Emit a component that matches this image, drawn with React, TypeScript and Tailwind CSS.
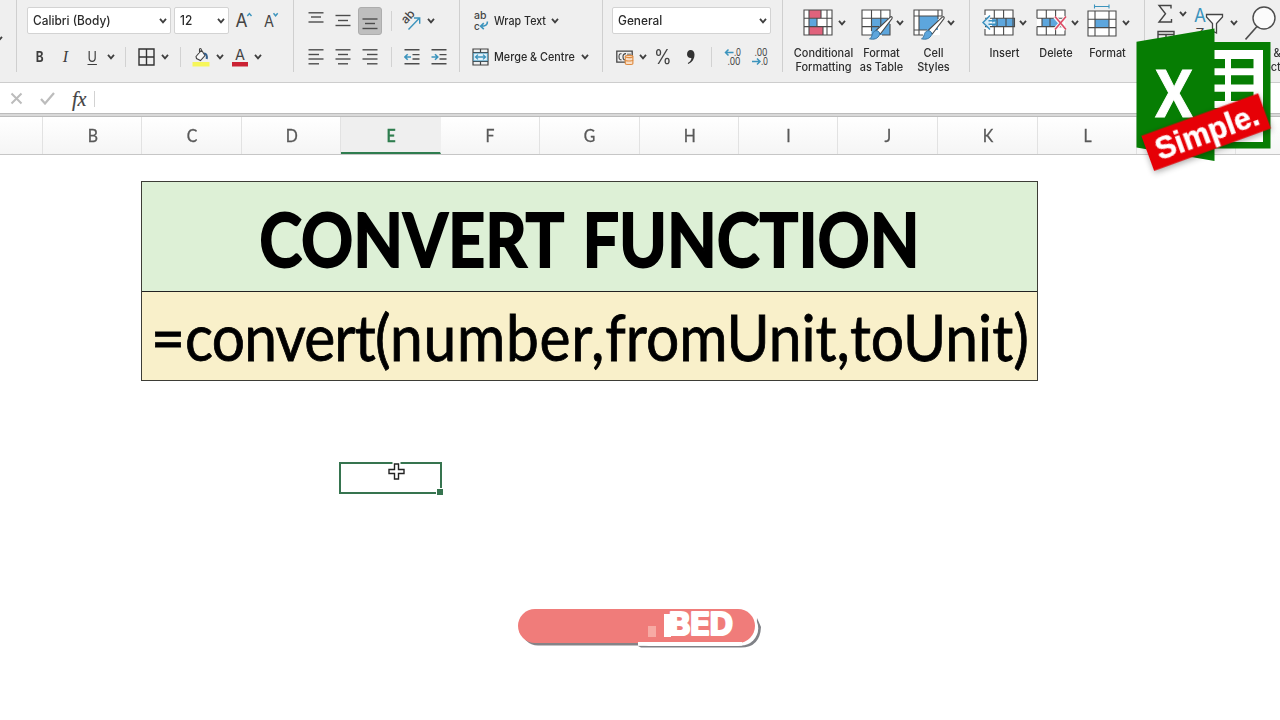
import React from 'react';
import clsx from 'clsx';

type SlotProps = { className: string; children?: React.ReactNode };

const DARK = '#444444';
const BLUE = '#3c94bd';

const columns = [
  { name: '', width: 'w-[43px]' },
  { name: 'B', width: 'w-[99px]' },
  { name: 'C', width: 'w-[100px]' },
  { name: 'D', width: 'w-[99px]' },
  { name: 'E', width: 'w-[100px]' },
  { name: 'F', width: 'w-[99px]' },
  { name: 'G', width: 'w-[100px]' },
  { name: 'H', width: 'w-[99px]' },
  { name: 'I', width: 'w-[99px]' },
  { name: 'J', width: 'w-[100px]' },
  { name: 'K', width: 'w-[100px]' },
  { name: 'L', width: 'w-[99px]' },
  { name: '', width: 'w-[99px]' },
];

// fixed-width cell of the toolbar, content centred
function Slot({ className, children }: SlotProps) {
  return <div className={clsx('flex h-full shrink-0 items-center justify-center', className)}>{children}</div>;
}

function Chevron() {
  return (
    <svg width="8" height="6" viewBox="0 0 8 6" fill="none" className="shrink-0">
      <path d="M1 .9 4 4.4 7 .9" stroke="#3f3f3f" strokeWidth="1.8" />
    </svg>
  );
}

function Divider({ className }: { className?: string }) {
  return <div className={clsx('w-px shrink-0 bg-[#d2d2d2]', className ?? 'h-[20px]')} />;
}

function Group({ className, children }: SlotProps) {
  return (
    <div className={clsx('relative flex h-full shrink-0 flex-col pt-[7px]', className)}>
      {children}
      <div className="absolute right-0 top-0 h-[72px] w-px bg-[#cfcfcf]" />
    </div>
  );
}

function TopRow({ className, children }: { className?: string; children: React.ReactNode }) {
  return <div className={clsx('flex h-[27px] shrink-0 items-center', className)}>{children}</div>;
}

function BottomRow({ className, children }: { className?: string; children: React.ReactNode }) {
  return <div className={clsx('mt-[6px] flex h-[34px] shrink-0 items-center', className)}>{children}</div>;
}

function Lines({ rows }: { rows: number[][] }) {
  return (
    <svg width="16" height="18" viewBox="0 0 16 18" fill="none" stroke="#4c4c4c" strokeWidth="1.4">
      {rows.map(([x1, x2, y], i) => (
        <path key={i} d={`M${x1} ${y}H${x2}`} />
      ))}
    </svg>
  );
}

function SelectBox({ value, className }: { value: string; className: string }) {
  return (
    <div className={clsx('flex h-[27px] shrink-0 items-center justify-between rounded-[2px] border border-[#d3d3d3] bg-white pl-[5px] pr-[3px] pt-px text-[12.5px] font-medium text-[#2a2a2a]', className)}>
      <span className="origin-left scale-x-[.95] whitespace-nowrap">{value}</span>
      <Chevron />
    </div>
  );
}

function Orientation() {
  return (
    <svg width="20" height="20" viewBox="0 0 20 20" fill="none" className="overflow-visible">
      <text x="4" y="13.5" transform="rotate(-47 4 13.5)" fontSize="12" fontWeight="500" textLength="14" fill={DARK}>ab</text>
      <path d="M6.5 18.5 17.5 7M12 7h5.7v5.7" stroke={BLUE} strokeWidth="1.4" />
    </svg>
  );
}

function Indent({ right }: { right?: boolean }) {
  return (
    <svg width="16" height="18" viewBox="0 0 16 18" fill="none" stroke="#4c4c4c" strokeWidth="1.4">
      <path d="M.5 1.8H15.5M8.5 6.6H15.5M8.5 11H15.5M.5 15.8H15.5" />
      {right ? (
        <path d="M.5 9H6.5M4 6.2 6.8 9 4 11.8" stroke={BLUE} strokeWidth="1.6" />
      ) : (
        <path d="M7 9H1M3.7 6.2.9 9l2.8 2.8" stroke={BLUE} strokeWidth="1.6" />
      )}
    </svg>
  );
}

function WrapIcon() {
  return (
    <svg width="16" height="20" viewBox="0 0 16 20" fill="none" className="overflow-visible">
      <text x="1" y="8" fontSize="10" textLength="12.5" lengthAdjust="spacingAndGlyphs" fill={DARK}>ab</text>
      <text x="1" y="19" fontSize="10" fill={DARK}>c</text>
      <path d="M14.4 10.5c.3 3.2-2 4.7-6.5 4.7M10.8 12.2 7.6 15.2l3.2 3" stroke={BLUE} strokeWidth="1.6" />
    </svg>
  );
}

function MergeIcon() {
  return (
    <svg width="17" height="18" viewBox="0 0 17 18" fill="none">
      <path d="M1 1H16V17H1ZM1 4.5H16M1 13.5H16M8.5 1V4.5M8.5 13.5V17" stroke={DARK} strokeWidth="1.2" />
      <path d="M1.6 5.2H15.4V12.8H1.6Z" fill="#e5f2fa" stroke={BLUE} strokeWidth=".8" />
      <path d="M3.5 9H13.5M6 6.6 3.5 9 6 11.4M11 6.6 13.5 9 11 11.4" stroke={BLUE} strokeWidth="1.3" />
    </svg>
  );
}

function CurrencyIcon() {
  return (
    <svg width="18" height="18" viewBox="0 0 18 18" fill="none">
      <path d="M.8 3.2H16.2V14.2H.8Z" stroke={DARK} strokeWidth="1.3" />
      <path d="M5.5 5.8Q3 5.2 3 8.7T5.5 11.8M10 5.6Q7 5.6 7 8.7T9 12M12 5.5v2M14 5.5v2" stroke={DARK} strokeWidth="1.1" />
      <path d="M9.3 8.4c0-1.4 7.6-1.4 7.6 0v7c0 1.5-7.6 1.5-7.6 0Z" fill="#f9dfc7" stroke="#df8c42" strokeWidth="1.1" />
      <path d="M9.3 8.6c0 1.4 7.6 1.4 7.6 0M9.3 12c0 1.3 7.6 1.3 7.6 0" stroke="#df8c42" strokeWidth="1.1" />
    </svg>
  );
}

function Decimals({ decrease }: { decrease?: boolean }) {
  return (
    <svg width="18" height="20" viewBox="0 0 18 20" fill="none" className="overflow-visible">
      <text x={decrease ? 3.5 : 10} y="8.5" fontSize="10" textLength={decrease ? 13 : 7} lengthAdjust="spacingAndGlyphs" fill={DARK}>{decrease ? '.00' : '.0'}</text>
      <text x={decrease ? 10 : 3.5} y="18" fontSize="10" textLength={decrease ? 7 : 13} lengthAdjust="spacingAndGlyphs" fill={DARK}>{decrease ? '.0' : '.00'}</text>
      {decrease ? (
        <path d="M1 14.5H9M6 11.5 9 14.5 6 17.5" stroke={BLUE} strokeWidth="1.5" />
      ) : (
        <path d="M9.5 5.5H1.5M4.5 2.5 1.5 5.5 4.5 8.5" stroke={BLUE} strokeWidth="1.5" />
      )}
    </svg>
  );
}

function ConditionalIcon() {
  return (
    <svg width="30" height="27" viewBox="0 0 30 27" fill="none">
      <path d="M1 1H29V26H1Z" fill="#fff" />
      <path d="M6 1H18V9.3H6ZM6 17.6H20V26H6Z" fill="#e0627c" />
      <path d="M6 9.3H14V17.6H6Z" fill="#5da6dd" />
      <path d="M1 1H29V26H1ZM1 9.3H29M1 17.6H29M6 1V26M24 1V26M18 1V9.3M14 9.3V17.6M20 17.6V26" stroke="#4a4a4a" strokeWidth="1.1" />
    </svg>
  );
}

function Brush() {
  return (
    <>
      <path d="M15 21.5 29 8.3c1.5-1.4 3 0 1.8 1.6L19.3 25Z" fill="#fff" stroke="#4a4a4a" strokeWidth="1.1" />
      <path d="M18.8 25.2c-1.8 5-6.5 5.6-10.3 4.6 3.3-1 1.8-7 6.2-8.1 2-.5 4.1 1.4 4.1 3.5Z" fill="#5da6dd" stroke="#34719b" strokeWidth=".9" />
    </>
  );
}

function FormatTableIcon() {
  return (
    <svg width="33" height="32" viewBox="0 0 33 32" fill="none">
      <path d="M1 1H29V26H1Z" fill="#fff" />
      <path d="M10.5 9.3H29V26H10.5Z" fill="#5da6dd" />
      <path d="M29 9V1H1V26H11M1 9.3H27M1 17.6H18M10.5 1V22M19.8 1V18M29 15V26H21" stroke="#4a4a4a" strokeWidth="1.1" />
      <Brush />
    </svg>
  );
}

function CellStylesIcon() {
  return (
    <svg width="33" height="32" viewBox="0 0 33 32" fill="none">
      <path d="M1 1H29V7H27V26H1Z" fill="#fff" />
      <path d="M6 7H25V21H6Z" fill="#5da6dd" />
      <path d="M29 7V1H1V26H10M1 7H29M6 1V26M25 1V10M1 21H14" stroke="#4a4a4a" strokeWidth="1.1" />
      <Brush />
    </svg>
  );
}

function InsertIcon() {
  return (
    <svg width="34" height="27" viewBox="0 0 34 27" fill="none">
      <path d="M3 1H31V26H3Z" fill="#fff" />
      <path d="M10 9.3H32V17.6H10Z" fill="#5da6dd" />
      <path d="M3 6V1H31V26H3V20M3 9.3H32.5V17.6H3M12.3 1V9.3M21.6 1V9.3M12.3 17.6V26M21.6 17.6V26M15 9.3V17.6M24 9.3V17.6" stroke="#4a4a4a" strokeWidth="1.1" />
      <path d="M14 11.8H6.5M6.5 15.3H14V11.8M8 6.5 1 13.5 8 20.5" fill="#d8ebf7" stroke="#3990bf" strokeWidth="1.5" />
    </svg>
  );
}

function DeleteIcon() {
  return (
    <svg width="32" height="27" viewBox="0 0 32 27" fill="none">
      <path d="M1 1H29V26H1Z" fill="#fff" />
      <path d="M6 9.3H23V17.6H6Z" fill="#5da6dd" />
      <path d="M1 9.3V1H29V9.3H1M6 9.3V17.6M1 17.6V26H29V17.6H1M10.3 1V9.3M19.6 1V9.3M10.3 17.6V26M19.6 17.6V26M14 9.3V17.6" stroke="#4a4a4a" strokeWidth="1.1" />
      <path d="M19 8 30 20.5M30 8 19 20.5" stroke="#f5f5f5" strokeWidth="4" />
      <path d="M19 7.5 30 20.5M30 7.5 19 20.5" stroke="#dc4963" strokeWidth="1.6" />
    </svg>
  );
}

function FormatIcon() {
  return (
    <svg width="30" height="33" viewBox="0 0 30 33" fill="none">
      <path d="M7.5 2.5H22M7.5 .5V4.5M22 .5V4.5" stroke={BLUE} strokeWidth="1.1" />
      <path d="M1 7H29V32H1Z" fill="#fff" />
      <path d="M8 15.3H22V23.6H8Z" fill="#5da6dd" />
      <path d="M1 7H29V32H1ZM1 15.3H29M1 23.6H29M8 7V32M22 7V32" stroke="#4a4a4a" strokeWidth="1.1" />
    </svg>
  );
}

function SortFilterIcon() {
  return (
    <svg width="32" height="34" viewBox="0 0 32 34" fill="none" className="overflow-visible">
      <text x="0" y="16" fontSize="18" textLength="12" lengthAdjust="spacingAndGlyphs" fill={BLUE}>A</text>
      <text x="1.5" y="32" fontSize="13" textLength="9" lengthAdjust="spacingAndGlyphs" fill={DARK}>Z</text>
      <path d="M12.5 8.5H28.5V11L22.5 17.5V27L18.5 25V17.5L12.5 11Z" fill="#fafafa" stroke={DARK} strokeWidth="1.3" />
    </svg>
  );
}

type BigButtonProps = {
  icon: React.ReactNode;
  lines: string[];
  width: string;
  iconWidth: string;
  labelWidth: string;
  gap?: string;
};

// large ribbon button: picture with a chevron on top, caption below
function BigButton({ icon, lines, width, iconWidth, labelWidth, gap = 'gap-[6px]' }: BigButtonProps) {
  return (
    <div className={clsx('shrink-0', width)}>
      <div className={clsx('flex h-[39px] items-center', gap)}>
        <div className={clsx('flex h-full shrink-0 items-center', iconWidth)}>{icon}</div>
        <Chevron />
      </div>
      <div className={clsx('-ml-[15px] mt-[4px] text-center text-[11.5px] font-medium leading-[14px] text-[#2e2e2e]', labelWidth)}>
        {lines.map((line) => (
          <div key={line} className="scale-x-[.95] whitespace-nowrap">{line}</div>
        ))}
      </div>
    </div>
  );
}

function Ribbon() {
  return (
    <div className="flex h-[83px] w-full overflow-hidden border-b border-[#cdcdcd] bg-[#efefef]">
      <Group className="w-[17px]">
        <div className="-ml-[5px] mt-[29px]"><Chevron /></div>
      </Group>

      <Group className="w-[277px] pl-[10px]">
        <TopRow>
          <SelectBox value="Calibri (Body)" className="w-[144px]" />
          <SelectBox value="12" className="ml-[3px] w-[55px]" />
          <svg width="50" height="24" viewBox="0 0 50 24" fill="none" className="ml-[6px]">
            <text x=".5" y="17.5" fontSize="19" textLength="12" lengthAdjust="spacingAndGlyphs" fill={DARK}>A</text>
            <path d="M12.3 7 14.4 4.5 16.5 7" stroke={BLUE} strokeWidth="1.4" />
            <text x="29" y="17.5" fontSize="16" textLength="10" lengthAdjust="spacingAndGlyphs" fill={DARK}>A</text>
            <path d="M38.5 4.2 40.6 6.8 42.7 4.2" stroke={BLUE} strokeWidth="1.4" />
          </svg>
        </TopRow>
        <BottomRow className="text-[14px] text-[#3d3d3d]">
          <Slot className="w-[25px] font-bold"><span className="-mt-px scale-x-[.85]">B</span></Slot>
          <Slot className="w-[27px]"><span className="-mt-px font-[Liberation_Serif] text-[16px] italic">I</span></Slot>
          <Slot className="w-[26px]"><span className="-mt-px scale-x-[.9] underline underline-offset-2">U</span></Slot>
          <Slot className="w-[12px]"><Chevron /></Slot>
          <Slot className="w-[17px]"><Divider /></Slot>
          <Slot className="w-[24px]">
            <svg width="17" height="18" viewBox="0 0 17 18" fill="none" stroke="#333" strokeWidth="1.4">
              <path d="M1 1H16V17H1ZM8.5 1V17M1 9H16" />
            </svg>
          </Slot>
          <Slot className="w-[14px]"><Chevron /></Slot>
          <Slot className="w-[16px]"><Divider /></Slot>
          <Slot className="w-[25px]">
            <svg width="18" height="20" viewBox="0 0 18 20" fill="none">
              <path d="M4 9.5 9.5 3.2 13 8.5 8.5 13.5 4.5 11.5ZM7.5 6V2.5Q8 .6 9.5 2.5" fill="#f7f7f7" stroke="#444" strokeWidth="1.1" />
              <path d="M12 6.5Q15.5 6.5 14.7 12" stroke="#355f8c" strokeWidth="2" />
              <path d="M.5 15H17.5V19.5H.5Z" fill="#f6f65a" />
            </svg>
          </Slot>
          <Slot className="w-[13px]"><Chevron /></Slot>
          <Slot className="w-[28px]">
            <svg width="18" height="20" viewBox="0 0 18 20" className="overflow-visible">
              <text x="4" y="13" fontSize="14.5" textLength="10" lengthAdjust="spacingAndGlyphs" fill={DARK}>A</text>
              <path d="M1 15H17V19.5H1Z" fill="#cb2233" />
            </svg>
          </Slot>
          <Slot className="w-[8px]"><Chevron /></Slot>
        </BottomRow>
      </Group>

      <Group className="w-[166px] pl-[9px]">
        <TopRow>
          <Slot className="w-[26px]"><Lines rows={[[0.5, 15.5, 0.8], [3, 13, 5], [0.5, 15.5, 10]]} /></Slot>
          <Slot className="w-[27px]"><Lines rows={[[0.5, 15.5, 3.5], [3, 13, 8.5], [0.5, 15.5, 13.5]]} /></Slot>
          <Slot className="w-[27px]">
            <div className="flex h-[28px] w-[24px] shrink-0 items-center justify-center rounded-[3px] border border-[#adadad] bg-[#bebebe] pt-[7px]">
              <Lines rows={[[0.5, 15.5, 4], [3, 13, 8.5], [0.5, 15.5, 13.5]]} />
            </div>
          </Slot>
          <Slot className="w-[16px]"><Divider /></Slot>
          <Slot className="w-[26px]"><Orientation /></Slot>
          <Slot className="w-[12px]"><Chevron /></Slot>
        </TopRow>
        <BottomRow>
          <Slot className="w-[26px]"><Lines rows={[[0.5, 15.5, 1.8], [0.5, 11, 6.5], [0.5, 15.5, 11], [0.5, 11, 15.8]]} /></Slot>
          <Slot className="w-[27px]"><Lines rows={[[0.5, 15.5, 1.8], [3, 13, 6.5], [0.5, 15.5, 11], [3, 13, 15.8]]} /></Slot>
          <Slot className="w-[27px]"><Lines rows={[[0.5, 15.5, 1.8], [5, 15.5, 6.5], [0.5, 15.5, 11], [5, 15.5, 15.8]]} /></Slot>
          <Slot className="w-[16px]"><Divider /></Slot>
          <Slot className="w-[26px]"><Indent /></Slot>
          <Slot className="w-[27px]"><Indent right /></Slot>
        </BottomRow>
      </Group>

      <Group className="w-[143px] pl-[10px] text-[11.5px] font-medium text-[#2b2b2b]">
        <TopRow>
          <Slot className="w-[22px]"><WrapIcon /></Slot>
          <div className="ml-[2px] w-[57px] whitespace-nowrap pt-[2px]"><span className="inline-block origin-left scale-x-[.93]">Wrap Text</span></div>
          <Chevron />
        </TopRow>
        <BottomRow>
          <Slot className="w-[20px]"><MergeIcon /></Slot>
          <div className="ml-[4px] w-[87px] whitespace-nowrap pt-[2px]"><span className="inline-block origin-left scale-x-[.94]">Merge &amp; Centre</span></div>
          <Chevron />
        </BottomRow>
      </Group>

      <Group className="w-[180px] pl-[9px]">
        <TopRow>
          <SelectBox value="General" className="w-[159px]" />
        </TopRow>
        <BottomRow>
          <Slot className="w-[26px]"><CurrencyIcon /></Slot>
          <Slot className="w-[9px]"><Chevron /></Slot>
          <Slot className="w-[32px] text-[20px] text-[#444]"><span className="scale-x-[.9]">%</span></Slot>
          <Slot className="w-[24px]">
            <svg width="10" height="16" viewBox="0 0 10 16">
              <path d="M4.5 1C7 1 8.5 2.8 8.5 5.5 8.5 10 6 13.5 2.2 15L1.8 14C4.3 12.6 5.3 11 5.4 9 2.8 9.3 1 7.6 1 5.2 1 2.8 2.5 1 4.5 1Z" fill="#333" />
            </svg>
          </Slot>
          <Slot className="w-[17px]"><Divider /></Slot>
          <Slot className="w-[25px]"><Decimals /></Slot>
          <Slot className="w-[30px]"><Decimals decrease /></Slot>
        </BottomRow>
      </Group>

      <Group className="w-[187px] !pt-[3px]">
        <div className="flex pl-[20px]">
          <BigButton icon={<ConditionalIcon />} lines={['Conditional', 'Formatting']} width="w-[58px]" iconWidth="w-[30px]" labelWidth="w-[71px]" gap="gap-[5px]" />
          <BigButton icon={<div className="mt-[5px]"><FormatTableIcon /></div>} lines={['Format', 'as Table']} width="w-[52px]" iconWidth="w-[33px]" labelWidth="w-[71px]" gap="gap-[2px]" />
          <BigButton icon={<div className="mt-[5px]"><CellStylesIcon /></div>} lines={['Cell', 'Styles']} width="w-[52px]" iconWidth="w-[33px]" labelWidth="w-[71px]" gap="gap-[1px]" />
        </div>
      </Group>

      <Group className="w-[175px] !pt-[3px]">
        <div className="flex pl-[12px]">
          <BigButton icon={<InsertIcon />} lines={['Insert']} width="w-[54px]" iconWidth="w-[34px]" labelWidth="w-[75px]" gap="gap-[3px]" />
          <BigButton icon={<DeleteIcon />} lines={['Delete']} width="w-[51px]" iconWidth="w-[32px]" labelWidth="w-[70px]" gap="gap-[3px]" />
          <BigButton icon={<div className="-mt-[5px]"><FormatIcon /></div>} lines={['Format']} width="w-[50px]" iconWidth="w-[30px]" labelWidth="w-[71px]" gap="gap-[5px]" />
        </div>
      </Group>

      <div className="flex shrink-0 pl-[12px]">
        <div className="w-[36px] pt-[4px]">
          <div className="flex h-[20px] items-center gap-[6px]">
            <svg width="16" height="20" viewBox="0 0 16 20" fill="none" className="shrink-0">
              <path d="M14 4.5V1.5H2L8.5 9.8 2 18H14.5V15" stroke="#444" strokeWidth="1.4" />
            </svg>
            <Chevron />
          </div>
          <svg width="18" height="18" viewBox="0 0 18 18" fill="none" className="mt-[6px]">
            <path d="M1 1.5H17V16H1ZM1 4.5H17M9 4.5V16" stroke="#444" strokeWidth="1.4" />
          </svg>
        </div>
        <div className="flex h-[42px] items-center gap-[4px] pl-[1px] pt-[4px]">
          <SortFilterIcon />
          <Chevron />
        </div>
        <div className="ml-[7px]">
          <svg width="32" height="44" viewBox="0 0 32 44" fill="none">
            <circle cx="19" cy="18" r="11" fill="#fbfbfb" stroke="#4c4c4c" strokeWidth="1.4" />
            <path d="M12 26.5 .5 39.5" stroke="#4c4c4c" strokeWidth="1.6" />
          </svg>
          <div className="ml-[3px] mt-[2px] w-[48px] text-[11.5px] font-medium leading-[14px] text-[#333]">
            <div className="origin-left scale-x-[.95] whitespace-nowrap">Find &amp;</div>
            <div className="origin-left scale-x-[.95]">Select</div>
          </div>
        </div>
      </div>
    </div>
  );
}

function FormulaBar() {
  return (
    <>
      <div className="flex h-[30px] items-center bg-white pl-[10px] pt-px">
        <svg width="13" height="13" viewBox="0 0 13 13" fill="none">
          <path d="M1.5 1.5 11.5 11.5M11.5 1.5 1.5 11.5" stroke="#bcbcbc" strokeWidth="2" />
        </svg>
        <svg width="15" height="13" viewBox="0 0 15 13" fill="none" className="ml-[17px]">
          <path d="M1 7 5 11.5 14 1" stroke="#bcbcbc" strokeWidth="2.2" />
        </svg>
        <span className="ml-[17px] w-[21px] font-[Liberation_Serif] text-[20px] italic leading-none text-[#444] [-webkit-text-stroke:.2px_#444]">fx</span>
        <Divider className="ml-[1px] h-[16px]" />
      </div>
      <div className="h-[4px] border-y border-[#bcbcbc] bg-[#d9d9d9]" />
    </>
  );
}

function ColumnHeaders() {
  return (
    <div className="flex h-[38px] w-full overflow-hidden border-b border-[#c6c6c6] bg-linear-to-b from-white to-[#f5f5f5]">
      {columns.map((c, i) => (
        <div
          key={i}
          className={clsx(
            'flex shrink-0 items-center justify-center border-r pl-px font-[Lato] text-[18px]',
            c.width,
            c.name === 'E'
              ? 'border-b-2 border-r-transparent border-b-[#2f7d4f] bg-[#efefef] pt-px text-[#2f7d4f] [-webkit-text-stroke:.7px_#2f7d4f]'
              : 'border-[#e2e2e2] pb-px text-[#595959] [-webkit-text-stroke:.3px_#595959]'
          )}
        >
          <span className="scale-x-[.88]">{c.name}</span>
        </div>
      ))}
    </div>
  );
}

function Sheet() {
  return (
    <div className="h-[565px] bg-white pl-[141px] pt-[26px]">
      <div className="w-[897px] border border-[#3d3d36] font-[Lato] text-black">
        <div className="flex h-[110px] items-center justify-center border-b border-[#222] bg-[#ddf0d6] pt-[4px] text-[74.5px] font-bold leading-none">
          <span className="scale-x-[.868] whitespace-nowrap [-webkit-text-stroke:1.8px_#000] [word-spacing:5px]">CONVERT FUNCTION</span>
        </div>
        <div className="flex h-[88px] items-center justify-center bg-[#f9f0ca] text-[63px] leading-none">
          <span className="scale-x-[.932] whitespace-nowrap [-webkit-text-stroke:.8px_#000]">
            =<span className="-tracking-[.9px]">convert(</span><span className="tracking-[.8px]">number,</span>fromUnit,toUnit)
          </span>
        </div>
      </div>
      <div className="relative ml-[198px] mt-[81px] h-[32px] w-[103px] border-2 border-[#36744f]">
        <div className="absolute -bottom-[4px] -right-[4px] h-[8px] w-[8px] border border-white bg-[#36744f]" />
        <svg width="18" height="20" viewBox="0 0 18 20" className="absolute left-[47px] -top-[2px]">
          <path d="M6.5 2H10.5V7.5H16V11.5H10.5V17H6.5V11.5H1V7.5H6.5Z" fill="#fff" stroke="#fff" strokeWidth="4" />
          <path d="M6.5 2H10.5V7.5H16V11.5H10.5V17H6.5V11.5H1V7.5H6.5Z" fill="#fff" stroke="#222" strokeWidth="1.4" />
        </svg>
      </div>
    </div>
  );
}

function Logo() {
  return (
    <svg width="150" height="155" viewBox="1130 25 150 155" className="absolute left-[1130px] top-[25px]">
      <path d="M1214 42H1270.5V148.5H1214Z" fill="#067d03" />
      <path d="M1214 50H1263V142H1214Z" fill="#fff" />
      {[59, 75.3, 91.8, 108, 124].map((y) => (
        <path key={y} d={`M1214 ${y}h11v9.2h-11zM1231 ${y}h22.5v9.2h-22.5z`} fill="#067d03" />
      ))}
      <path d="M1136.5 41.7 1214.5 28.5V161L1136.5 147.5Z" fill="#067d03" />
      <text x="1155.5" y="117" fontSize="67" fontWeight="bold" fontFamily="Open Sans" textLength="37" lengthAdjust="spacingAndGlyphs" fill="#fff" stroke="#fff" strokeWidth="1">X</text>
      <g transform="rotate(-20 1206.1 132.1)" className="drop-shadow-[0_2px_3px_rgba(0,0,0,.35)]">
        <path d="M1144 113.5H1268.3V150.7H1144Z" fill="#e60006" />
        <text x="1153" y="143" fontSize="32" fontWeight="bold" fontFamily="Liberation Sans" textLength="108" lengthAdjust="spacingAndGlyphs" fill="#fff" stroke="#fff" strokeWidth=".5">Simple.</text>
      </g>
    </svg>
  );
}

function SubscribeBadge() {
  return (
    <svg width="250" height="46" viewBox="515 605 250 46" className="absolute left-[515px] top-[605px]">
      <rect x="521" y="611.5" width="140" height="34" rx="17" fill="#858387" />
      <path d="M638 646H738Q757 644 757 618L761 627Q760 647.5 741 647.5H641Z" fill="#808287" />
      <path d="M638 611H741A16.5 16.5 0 0 1 741 645.5H638Z" fill="#fff" />
      <rect x="518" y="609" width="237" height="34" rx="17" fill="#f07c7a" />
      <rect x="638" y="642" width="104" height="3.5" fill="#fff" />
      <rect x="648" y="626" width="8" height="11" fill="#f7aaa4" />
      <path d="M664 614H671V637H664Z" fill="#fff" />
      <text x="669" y="635" fontSize="31" fontWeight="bold" fontFamily="Inter" textLength="64" lengthAdjust="spacingAndGlyphs" fill="#fff" stroke="#fff" strokeWidth="2.2" strokeLinejoin="round">BED</text>
    </svg>
  );
}

export default function App() {
  return (
    <div className="relative h-[720px] w-[1280px] overflow-hidden bg-white font-[Inter,sans-serif]">
      <Ribbon />
      <FormulaBar />
      <ColumnHeaders />
      <Sheet />
      <Logo />
      <SubscribeBadge />
    </div>
  );
}
